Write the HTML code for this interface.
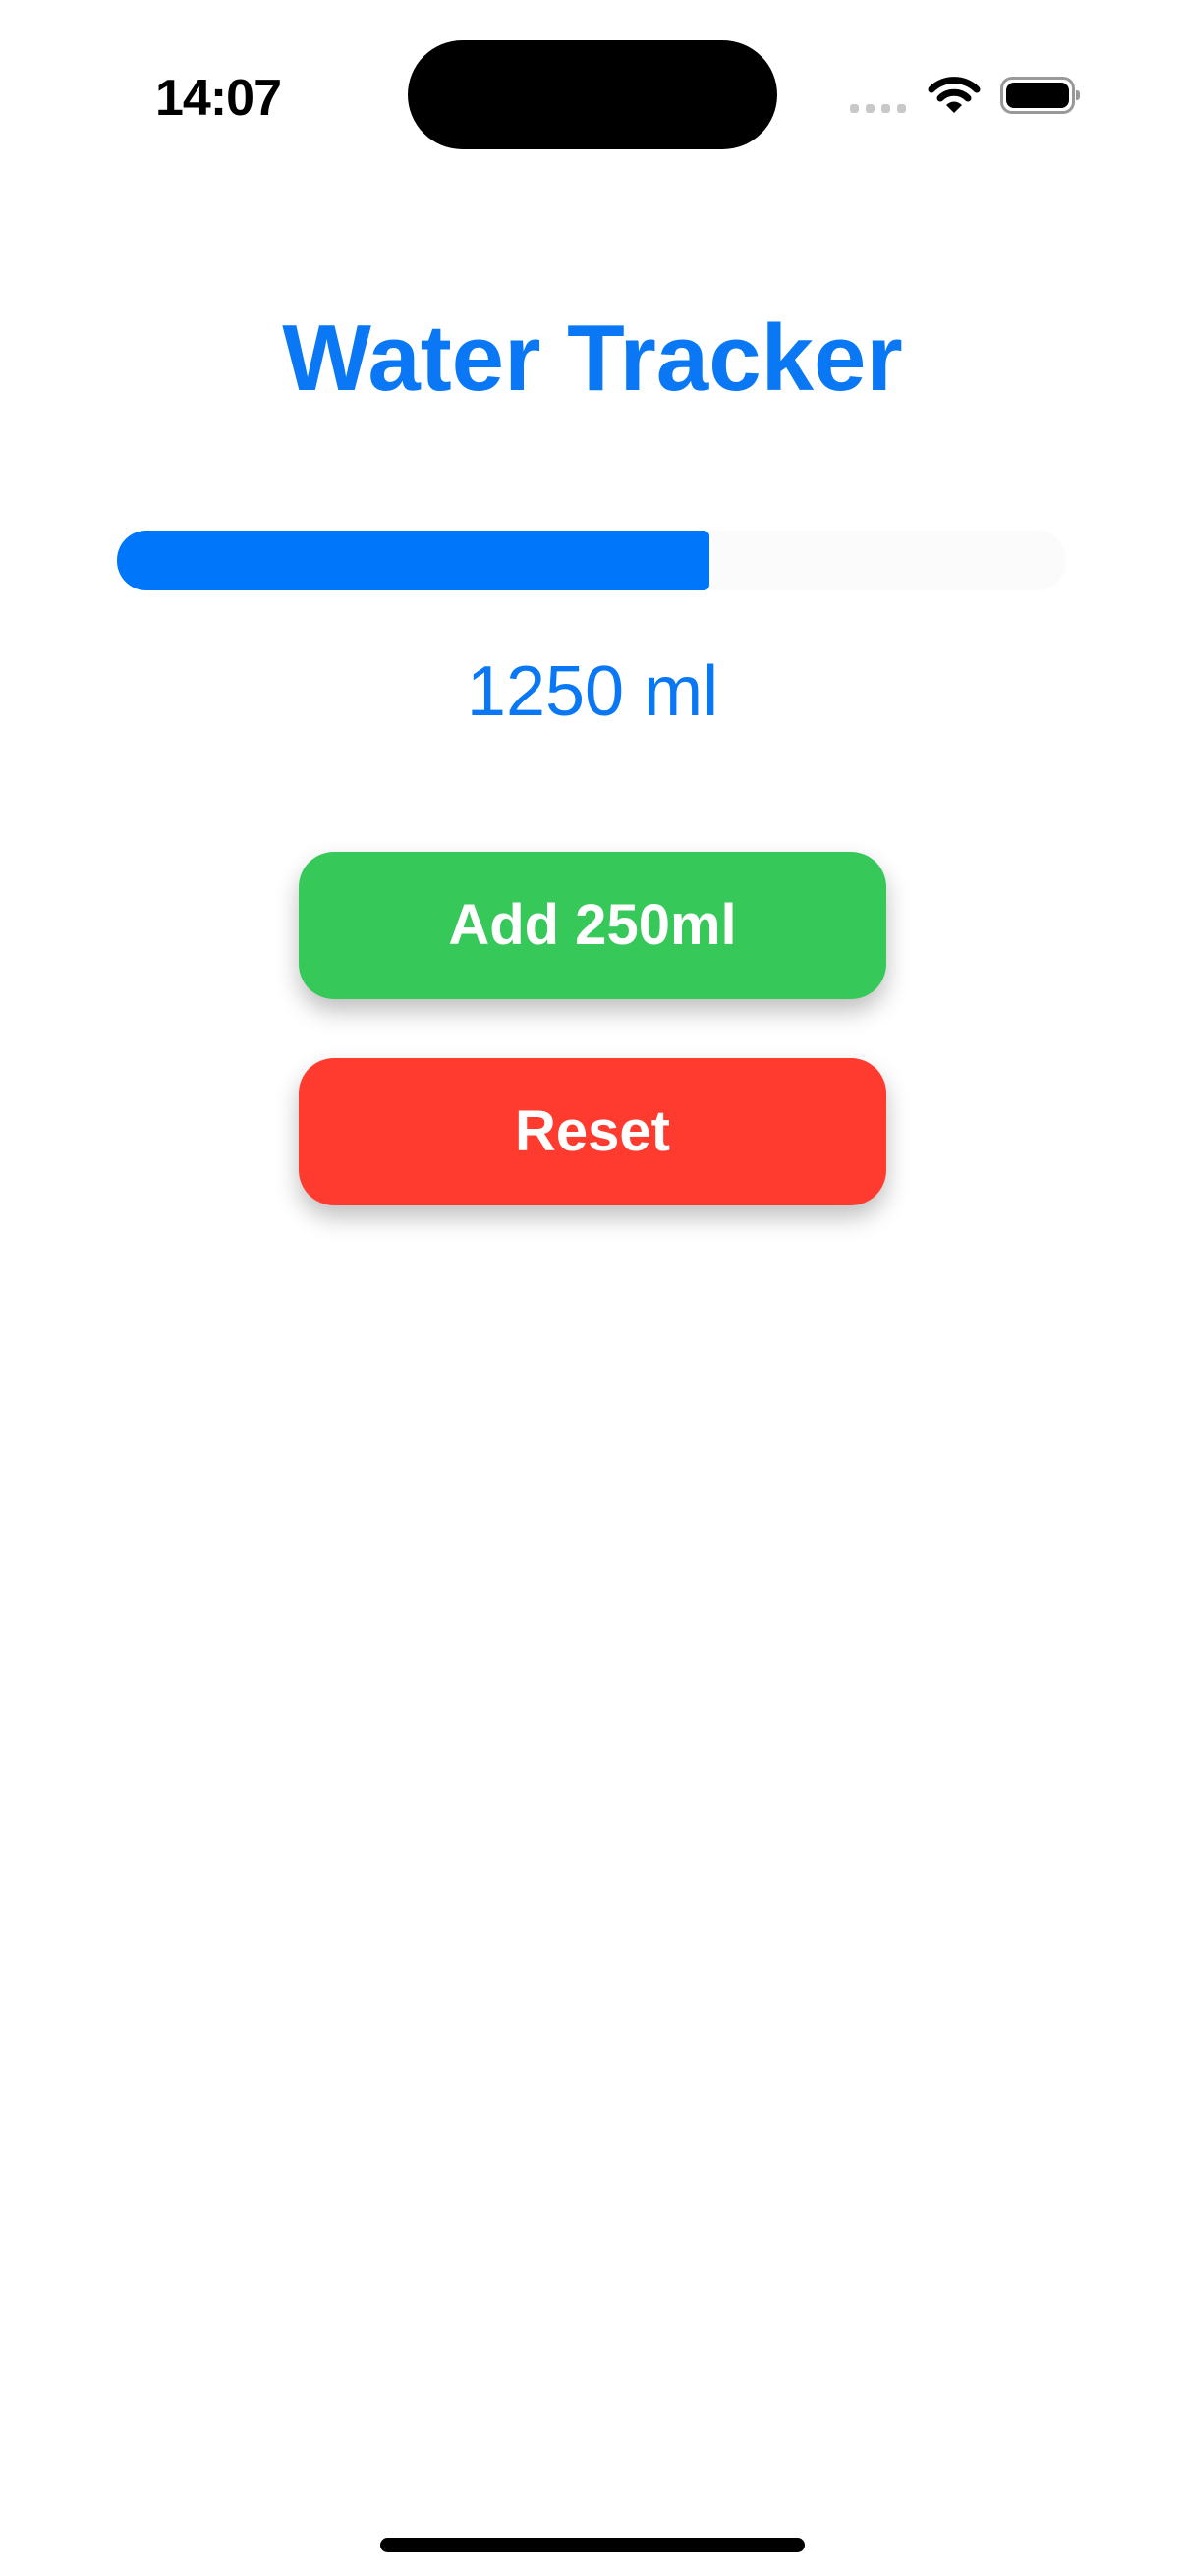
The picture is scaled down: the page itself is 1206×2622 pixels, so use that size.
<!DOCTYPE html>
<html><head><meta charset="utf-8"><style>
html,body{margin:0;padding:0;background:#fff;}
body{width:1206px;height:2622px;position:relative;overflow:hidden;font-family:"Liberation Sans",sans-serif;}
.abs{position:absolute;}
</style></head><body>
<div class="abs" style="left:158px;top:68px;font-size:52px;font-weight:bold;color:#000;line-height:64px;letter-spacing:-1px;">14:07</div>
<div class="abs" style="left:415px;top:41px;width:376px;height:111px;background:#000;border-radius:56px;"></div>
<div class="abs" style="left:865px;top:106px;width:9px;height:9px;background:#c8c8c8;border-radius:3px;"></div>
<div class="abs" style="left:881px;top:106px;width:9px;height:9px;background:#c8c8c8;border-radius:3px;"></div>
<div class="abs" style="left:897px;top:106px;width:9px;height:9px;background:#c8c8c8;border-radius:3px;"></div>
<div class="abs" style="left:913px;top:106px;width:9px;height:9px;background:#c8c8c8;border-radius:3px;"></div>
<svg class="abs" style="left:944px;top:76px" width="54" height="42" viewBox="0 0 54 42">
<path d="M4 15 A33 33 0 0 1 50 15" stroke="#000" stroke-width="7" fill="none" stroke-linecap="round"/>
<path d="M13 24 A20 20 0 0 1 41 24" stroke="#000" stroke-width="7" fill="none" stroke-linecap="round"/>
<path d="M19 31 L27 39 L35 31 A11 11 0 0 0 19 31 Z" fill="#000"/>
</svg>
<div class="abs" style="left:1018px;top:78px;width:70px;height:32px;border:3px solid #999;border-radius:12px;"></div>
<div class="abs" style="left:1024px;top:84px;width:64px;height:26px;background:#000;border-radius:8px;"></div>
<div class="abs" style="left:1095px;top:92px;width:4px;height:10px;background:#999;border-radius:0 3px 3px 0;"></div>

<div class="abs" style="left:0;top:310px;width:1206px;text-align:center;font-size:96px;font-weight:bold;color:#0a78f5;line-height:110px;">Water Tracker</div>

<div class="abs" style="left:119px;top:540px;width:966px;height:61px;background:#fbfbfb;border-radius:30px;"></div>
<div class="abs" style="left:119px;top:540px;width:603px;height:61px;background:#0077fa;border-radius:30px 6px 6px 30px;"></div>

<div class="abs" style="left:0;top:662px;width:1206px;text-align:center;font-size:72px;color:#0a78f5;line-height:84px;">1250 ml</div>

<div class="abs" style="left:304px;top:867px;width:598px;height:150px;background:#37c85a;border-radius:36px;box-shadow:0 12px 24px rgba(0,0,0,0.25);"></div>
<div class="abs" style="left:304px;top:907px;width:598px;text-align:center;font-size:58px;font-weight:bold;color:#fff;line-height:70px;">Add 250ml</div>
<div class="abs" style="left:304px;top:1077px;width:598px;height:150px;background:#ff3b30;border-radius:36px;box-shadow:0 12px 24px rgba(0,0,0,0.25);"></div>
<div class="abs" style="left:304px;top:1117px;width:598px;text-align:center;font-size:58px;font-weight:bold;color:#fff;line-height:70px;">Reset</div>

<div class="abs" style="left:387px;top:2583px;width:432px;height:15px;background:#000;border-radius:8px;"></div>
</body></html>
